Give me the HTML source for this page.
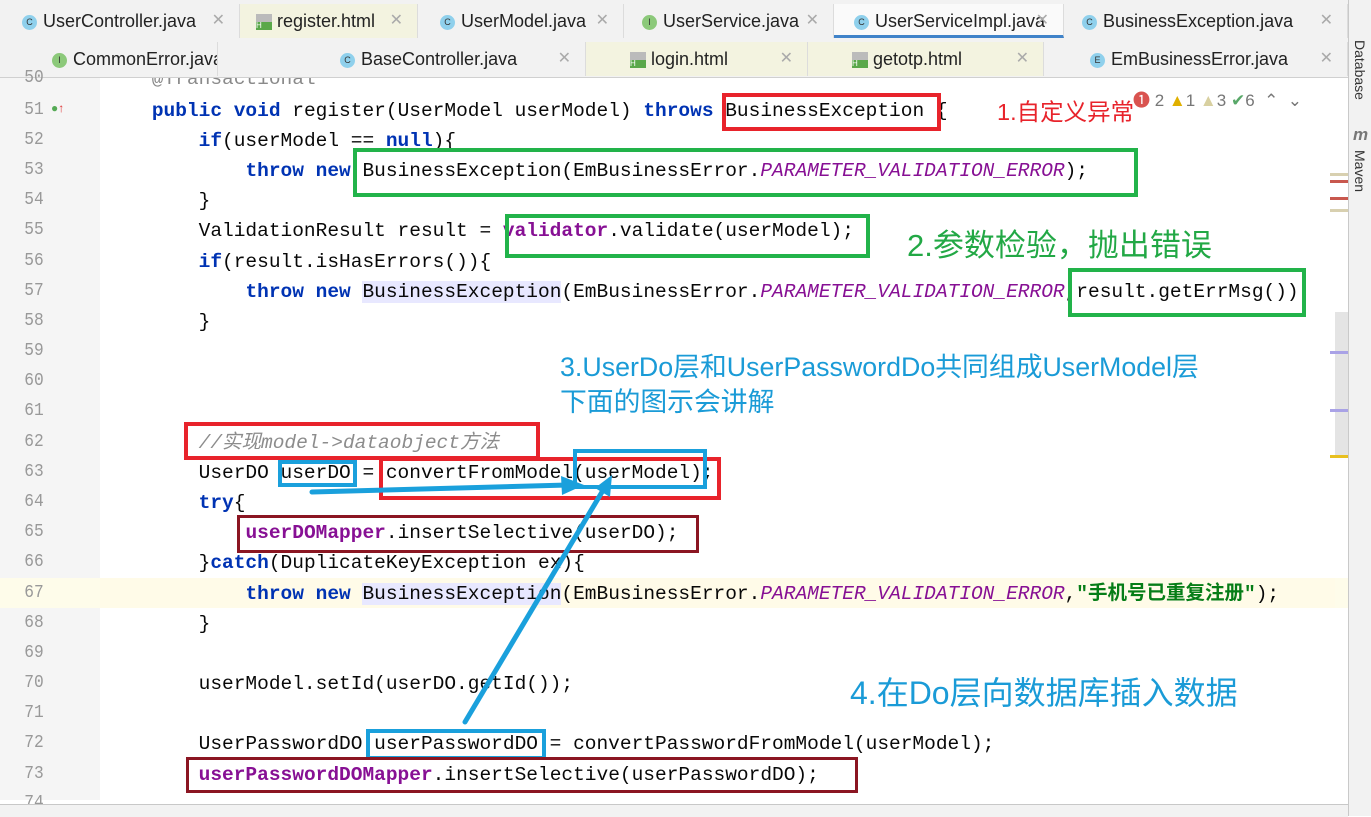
<!DOCTYPE html>
<html><head><meta charset="utf-8"><style>
body{margin:0;width:1371px;height:816px;overflow:hidden;background:#fff;position:relative;font-family:"Liberation Sans","Noto Sans CJK SC",sans-serif}
.a{position:absolute}
.tab{position:absolute;height:34px;line-height:34px;font-size:18px;color:#222;white-space:nowrap;border-right:1px solid #dcdcdc}
.ic{display:inline-block;width:15px;height:15px;border-radius:50%;font-size:9px;line-height:15px;text-align:center;vertical-align:middle;margin-right:6px;color:#333}
.c{background:#8fd0ec}.i{background:#8cc97a}.e{background:#8fd0ec}
.h{display:inline-block;width:16px;height:16px;vertical-align:middle;margin-right:5px;background:linear-gradient(#bbb 0 50%,#5aa84a 50%);font-size:8px;color:#fff;line-height:24px;text-align:left}
.x{color:#aaa;position:absolute;right:14px;font-size:16px}
.ln{position:absolute;left:0;width:46px;text-align:right;font:18px "Liberation Mono",monospace;color:#999;transform:scaleX(.9)}
.cd{position:absolute;left:105px;font:19.5px/30px "Liberation Mono","Noto Sans CJK SC",monospace;color:#080808;white-space:pre}
.k{color:#0033b3;font-weight:bold}.p{color:#871094;font-style:italic}.f{color:#871094;font-weight:bold}.cm{color:#8c8c8c;font-style:italic}.s{color:#067d17;font-weight:bold}.bg{background:#e8e8ff}
.bx{position:absolute;box-sizing:border-box}
</style></head><body>
<div class="cd" style="top:64px;color:#8a8a8a">    @Transactional</div>
<!-- tab rows -->
<div class="a" style="left:0;top:0;width:1348px;height:40px;background:#f2f2f2;border-bottom:1px solid #d0d0d0"></div>
<div class="a" style="left:0;top:40px;width:1348px;height:37px;background:#f2f2f2;border-bottom:1px solid #d0d0d0"></div>
<div class="tab" style="left:0;top:4px;width:240px;padding-left:22px;box-sizing:border-box"><span class="ic c">C</span>UserController.java<span class="x">✕</span></div>
<div class="tab" style="left:240px;top:4px;width:178px;padding-left:16px;box-sizing:border-box;background:#f3f3e0"><span class="h">H</span>register.html<span class="x">✕</span></div>
<div class="tab" style="left:418px;top:4px;width:206px;padding-left:22px;box-sizing:border-box"><span class="ic c">C</span>UserModel.java<span class="x">✕</span></div>
<div class="tab" style="left:624px;top:4px;width:210px;padding-left:18px;box-sizing:border-box"><span class="ic i">I</span>UserService.java<span class="x">✕</span></div>
<div class="tab" style="left:834px;top:4px;width:230px;padding-left:20px;box-sizing:border-box;background:#fafafa;border-bottom:3px solid #4083c9"><span class="ic c">C</span>UserServiceImpl.java<span class="x">✕</span></div>
<div class="tab" style="left:1064px;top:4px;width:284px;padding-left:18px;box-sizing:border-box"><span class="ic c">C</span>BusinessException.java<span class="x">✕</span></div>
<div class="tab" style="left:0;top:42px;width:218px;padding-left:52px;box-sizing:border-box;overflow:hidden"><span class="ic i">I</span>CommonError.java</div>
<div class="tab" style="left:218px;top:42px;width:368px;padding-left:122px;box-sizing:border-box"><span class="ic c">C</span>BaseController.java<span class="x">✕</span></div>
<div class="tab" style="left:586px;top:42px;width:222px;padding-left:44px;box-sizing:border-box;background:#f3f3e0"><span class="h">H</span>login.html<span class="x">✕</span></div>
<div class="tab" style="left:808px;top:42px;width:236px;padding-left:44px;box-sizing:border-box;background:#f3f3e0"><span class="h">H</span>getotp.html<span class="x">✕</span></div>
<div class="tab" style="left:1044px;top:42px;width:304px;padding-left:46px;box-sizing:border-box"><span class="ic e">E</span>EmBusinessError.java<span class="x">✕</span></div>
<!-- right sidebar -->
<div class="a" style="left:1348px;top:0;width:23px;height:816px;background:#f2f2f2;border-left:1px solid #c9c9c9"></div>
<div class="a" style="left:1352px;top:40px;font-size:14px;writing-mode:vertical-rl;color:#333">Database</div>
<div class="a" style="left:1353px;top:125px;font-size:17px;font-weight:bold;font-style:italic;color:#777">m</div>
<div class="a" style="left:1352px;top:150px;font-size:14px;writing-mode:vertical-rl;color:#333">Maven</div>
<!-- gutter -->
<div class="a" style="left:0;top:78px;width:100px;height:722px;background:#f5f5f5"></div>
<div class="a" style="left:0;top:578px;width:1348px;height:30px;background:#fefcea"></div>
<div class="a" style="left:100px;top:578px;width:1235px;height:30px;background:#fffbe8"></div>
<!-- scrollbar / markers -->
<div class="a" style="left:1335px;top:312px;width:13px;height:145px;background:#e4e4e4"></div>
<div class="a" style="left:1330px;top:173px;width:18px;height:3px;background:#d8d0b0"></div>
<div class="a" style="left:1330px;top:180px;width:18px;height:3px;background:#c8584e"></div>
<div class="a" style="left:1330px;top:197px;width:18px;height:3px;background:#c8584e"></div>
<div class="a" style="left:1330px;top:209px;width:18px;height:3px;background:#d8d0b0"></div>
<div class="a" style="left:1330px;top:351px;width:18px;height:3px;background:#a9a2e6"></div>
<div class="a" style="left:1330px;top:409px;width:18px;height:3px;background:#a9a2e6"></div>
<div class="a" style="left:1330px;top:455px;width:18px;height:3px;background:#e8c020"></div>
<div class="a" style="left:1133px;top:86px;font-size:17px;color:#777;white-space:nowrap"><span style="color:#d9534f">❶</span> 2 <span style="color:#e0b000">▲</span>1 <span style="color:#d8d0a0">▲</span>3 <span style="color:#59a869">✔</span>6 &nbsp;⌃ &nbsp;⌄</div>
<!-- line numbers -->
<div class="ln" style="top:68px">50</div><div class="ln" style="top:100px">51</div><div class="ln" style="top:130px">52</div><div class="ln" style="top:160px">53</div><div class="ln" style="top:190px">54</div><div class="ln" style="top:220px">55</div><div class="ln" style="top:251px">56</div><div class="ln" style="top:281px">57</div><div class="ln" style="top:311px">58</div><div class="ln" style="top:341px">59</div><div class="ln" style="top:371px">60</div><div class="ln" style="top:401px">61</div><div class="ln" style="top:432px">62</div><div class="ln" style="top:462px">63</div><div class="ln" style="top:492px">64</div><div class="ln" style="top:522px">65</div><div class="ln" style="top:552px">66</div><div class="ln" style="top:583px">67</div><div class="ln" style="top:613px">68</div><div class="ln" style="top:643px">69</div><div class="ln" style="top:673px">70</div><div class="ln" style="top:703px">71</div><div class="ln" style="top:733px">72</div><div class="ln" style="top:764px">73</div><div class="ln" style="top:793px">74</div>
<div class="a" style="left:51px;top:101px;font-size:12px;color:#5a5;">●<span style="color:#d33">↑</span></div>
<!-- code -->
<div class="cd" style="top:96px">    <span class="k">public void</span> register(UserModel userModel) <span class="k">throws</span> BusinessException {</div>
<div class="cd" style="top:126px">        <span class="k">if</span>(userModel == <span class="k">null</span>){</div>
<div class="cd" style="top:156px">            <span class="k">throw new</span> BusinessException(EmBusinessError.<span class="p">PARAMETER_VALIDATION_ERROR</span>);</div>
<div class="cd" style="top:186px">        }</div>
<div class="cd" style="top:216px">        ValidationResult result = <span class="f">validator</span>.validate(userModel);</div>
<div class="cd" style="top:247px">        <span class="k">if</span>(result.isHasErrors()){</div>
<div class="cd" style="top:277px">            <span class="k">throw new</span> <span class="bg">BusinessException</span>(EmBusinessError.<span class="p">PARAMETER_VALIDATION_ERROR</span>,result.getErrMsg());</div>
<div class="cd" style="top:307px">        }</div>
<div class="cd" style="top:428px">        <span class="cm">//实现model-&gt;dataobject方法</span></div>
<div class="cd" style="top:458px">        UserDO userDO = convertFromModel(userModel);</div>
<div class="cd" style="top:488px">        <span class="k">try</span>{</div>
<div class="cd" style="top:518px">            <span class="f">userDOMapper</span>.insertSelective(userDO);</div>
<div class="cd" style="top:548px">        }<span class="k">catch</span>(DuplicateKeyException ex){</div>
<div class="cd" style="top:579px">            <span class="k">throw new</span> <span class="bg">BusinessException</span>(EmBusinessError.<span class="p">PARAMETER_VALIDATION_ERROR</span>,<span class="s">"手机号已重复注册"</span>);</div>
<div class="cd" style="top:609px">        }</div>
<div class="cd" style="top:669px">        userModel.setId(userDO.getId());</div>
<div class="cd" style="top:729px">        UserPasswordDO userPasswordDO = convertPasswordFromModel(userModel);</div>
<div class="cd" style="top:760px">        <span class="f">userPasswordDOMapper</span>.insertSelective(userPasswordDO);</div>
<!-- bottom panel -->
<div class="a" style="left:0;top:804px;width:1348px;height:12px;background:#f2f2f2;border-top:1px solid #c8c8c8"></div>
<!-- boxes -->
<div class="bx" style="left:722px;top:93px;width:219px;height:38px;border:4px solid #e8232b"></div>
<div class="bx" style="left:353px;top:148px;width:785px;height:49px;border:4px solid #22b34a"></div>
<div class="bx" style="left:505px;top:214px;width:365px;height:44px;border:4px solid #22b34a"></div>
<div class="bx" style="left:1068px;top:268px;width:238px;height:49px;border:4px solid #22b34a"></div>
<div class="bx" style="left:184px;top:422px;width:356px;height:38px;border:4px solid #e8232b"></div>
<div class="bx" style="left:379px;top:457px;width:342px;height:43px;border:4px solid #e8232b"></div>
<div class="bx" style="left:278px;top:460px;width:79px;height:27px;border:4px solid #1aa0dc"></div>
<div class="bx" style="left:573px;top:449px;width:134px;height:40px;border:4px solid #1aa0dc"></div>
<div class="bx" style="left:237px;top:515px;width:462px;height:38px;border:3px solid #8b1622"></div>
<div class="bx" style="left:366px;top:729px;width:180px;height:31px;border:4px solid #1aa0dc"></div>
<div class="bx" style="left:186px;top:757px;width:672px;height:36px;border:3px solid #8b1622"></div>
<svg class="a" style="left:0;top:0" width="1371" height="816">
<g stroke="#1aa0dc" stroke-width="5" fill="#1aa0dc" stroke-linecap="round">
<line x1="312" y1="492" x2="568" y2="485"/><polygon points="584,485 561,476 562,495" stroke="none"/>
<line x1="465" y1="722" x2="602" y2="492"/><polygon points="612,475 595,488 610,497" stroke="none"/>
</g></svg>
<!-- annotations -->
<div class="a" style="left:997px;top:93px;font-size:23.5px;color:#e8232b">1.自定义异常</div>
<div class="a" style="left:907px;top:220px;font-size:31px;color:#22a845">2.参数检验，抛出错误</div>
<div class="a" style="left:560px;top:350px;font-size:26.8px;line-height:35px;color:#1a9bd7">3.UserDo层和UserPasswordDo共同组成UserModel层<br>下面的图示会讲解</div>
<div class="a" style="left:850px;top:668px;font-size:32px;color:#1a9bd7">4.在Do层向数据库插入数据</div>
</body></html>
